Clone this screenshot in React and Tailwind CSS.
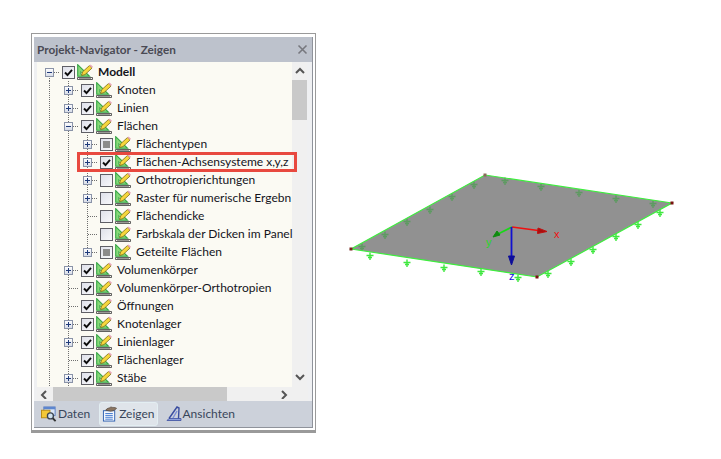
import React from "react";

const rows = [
  { t: "Modell", l: 0, e: "-", c: "y", bold: true },
  { t: "Knoten", l: 1, e: "+", c: "y" },
  { t: "Linien", l: 1, e: "+", c: "y" },
  { t: "Flächen", l: 1, e: "-", c: "y" },
  { t: "Flächentypen", l: 2, e: "+", c: "p" },
  { t: "Flächen-Achsensysteme x,y,z", l: 2, e: "+", c: "y", mark: true },
  { t: "Orthotropierichtungen", l: 2, e: "+", c: "n" },
  { t: "Raster für numerische Ergebn", l: 2, e: "+", c: "n" },
  { t: "Flächendicke", l: 2, c: "n" },
  { t: "Farbskala der Dicken im Panel", l: 2, c: "n" },
  { t: "Geteilte Flächen", l: 2, e: "+", c: "p", last: true },
  { t: "Volumenkörper", l: 1, e: "+", c: "y" },
  { t: "Volumenkörper-Orthotropien", l: 1, c: "y" },
  { t: "Öffnungen", l: 1, c: "y" },
  { t: "Knotenlager", l: 1, e: "+", c: "y" },
  { t: "Linienlager", l: 1, e: "+", c: "y" },
  { t: "Flächenlager", l: 1, c: "y" },
  { t: "Stäbe", l: 1, e: "+", c: "y" },
];

function Guide() {
  return (
    <svg width="19" height="18" className="shrink-0" shapeRendering="crispEdges">
      <line x1="8.5" y1="0" x2="8.5" y2="18" stroke="#6f6f6f" strokeDasharray="1 1" />
    </svg>
  );
}

function Expander({ e, root, last }) {
  return (
    <svg width="19" height="18" className="shrink-0" shapeRendering="crispEdges">
      <line x1="8.5" y1={root ? 9 : 0} x2="8.5" y2={last ? 9 : 18} stroke="#6f6f6f" strokeDasharray="1 1" />
      <line x1="9" y1="9.5" x2="19" y2="9.5" stroke="#6f6f6f" strokeDasharray="1 1" />
      {e && (
        <>
          <defs>
            <linearGradient id="exp" x1="0" y1="0" x2="0" y2="1">
              <stop offset="0" stopColor="#ffffff" />
              <stop offset="1" stopColor="#d5dae6" />
            </linearGradient>
          </defs>
          <rect x="4.5" y="5.5" width="8" height="8" fill="url(#exp)" stroke="#8a93a8" />
          <line x1="6" y1="9.5" x2="11" y2="9.5" stroke="#1f3a7a" />
          {e === "+" && <line x1="8.5" y1="7" x2="8.5" y2="12" stroke="#1f3a7a" />}
        </>
      )}
    </svg>
  );
}

function Check({ c }) {
  return (
    <span className="ml-[2px] flex h-[13px] w-[13px] shrink-0 items-center justify-center border border-[#5f5f66] bg-gradient-to-br from-[#dfe1ea] to-[#f8f8fb]">
      {c === "y" && (
        <svg width="11" height="11" viewBox="0 0 11 11">
          <path d="M2 5.5 L4.5 8 L9 2.8" fill="none" stroke="#0c0c0c" strokeWidth="1.9" />
        </svg>
      )}
      {c === "p" && <span className="h-[7px] w-[7px] bg-[#8b8b8b]" />}
    </span>
  );
}

function ModelIcon() {
  return (
    <svg width="16" height="16" viewBox="0 0 16 16" className="ml-[2px] shrink-0">
      <path d="M0.7 0.7 L0.7 12.3 L12.5 12.3 Z" fill="#86d977" stroke="#35a545" strokeWidth="1.1" />
      <path d="M3.5 7.5 L3.5 10.3 L6.5 10.3 Z" fill="#d8f0cf" stroke="#35a545" strokeWidth="0.7" />
      <path d="M4.6 11.6 L5.4 8 L12.4 1.6 L15 4.1 L8 10.6 Z" fill="#f6d63c" stroke="#7d6c18" strokeWidth="0.8" />
      <path d="M12.4 1.6 L13.6 0.4 L16 2.8 L15 4.1 Z" fill="#e9a9ba" />
      <path d="M0.5 13.5 H15.5 V15.5 H0.5 Z" fill="#f4f4ee" stroke="#3a3a3a" strokeWidth="0.8" />
      <path d="M3 14 V15 M5 14 V15 M7 14 V15 M9 14 V15 M11 14 V15 M13 14 V15" stroke="#111" strokeWidth="0.8" />
    </svg>
  );
}

function Row({ r }) {
  return (
    <div className="relative flex h-[18px] items-center">
      {r.l >= 1 && <Guide />}
      {r.l >= 2 && <Guide />}
      <Expander e={r.e} root={r.l === 0} last={r.last} />
      <Check c={r.c} />
      <ModelIcon />
      <span className={`ml-[5px] whitespace-nowrap text-[#14141c] ${r.bold ? "font-bold" : ""}`}>{r.t}</span>
      {r.mark && (
        <span className="absolute left-[36px] top-[-1px] z-10 h-[20px] w-[220px] border-[3px] border-[#e8493f]" />
      )}
    </div>
  );
}

function Chevron({ d, className = "" }) {
  const paths = {
    up: "M1 6 L5 2 L9 6",
    down: "M1 2 L5 6 L9 2",
    left: "M6 1 L2 5 L6 9",
    right: "M3 1 L7 5 L3 9",
  };
  return (
    <svg width="10" height="10" viewBox="0 0 10 8" className={`shrink-0 ${className}`}>
      <path d={paths[d]} fill="none" stroke="#555" strokeWidth="2" />
    </svg>
  );
}

function Tab({ icon, label, active }) {
  return (
    <div
      className={`flex h-[24px] items-center gap-[1px] px-[2px] ${
        active ? "rounded-[3px] border border-[#e3eef2] bg-[#dfe4ea]" : "border border-transparent"
      }`}
    >
      {icon}
      <span>{label}</span>
    </div>
  );
}

const DataIcon = (
  <svg width="16" height="16" viewBox="0 0 17 17" className="shrink-0">
    <rect x="3" y="1" width="12" height="9" fill="#dbe6f8" stroke="#5c7fc0" />
    <rect x="3" y="1" width="12" height="2.5" fill="#5c86cf" />
    <rect x="0.5" y="4.5" width="9" height="8" fill="#f3c838" stroke="#b88a12" />
    <circle cx="10" cy="10.5" r="3.2" fill="#cfe0ee" stroke="#3c4450" strokeWidth="1.4" />
    <path d="M12.5 13 L15.5 16" stroke="#333" strokeWidth="2" />
  </svg>
);

const ShowIcon = (
  <svg width="16" height="18" viewBox="0 0 17 18" className="shrink-0">
    <rect x="1.5" y="5.5" width="12" height="11" fill="#f4f7fd" stroke="#2d5fb0" />
    <path d="M3.5 8.5 H11.5 M3.5 10.5 H11.5 M3.5 12.5 H11.5 M3.5 14.5 H11.5" stroke="#3f77cf" />
    <path d="M4 5 C5 2.5 8 3 9.5 1.5 C11 2.5 14 1.5 15.5 3 C14 5 11 6 9 6 Z" fill="#8a7561" stroke="#4c4036" strokeWidth="0.7" />
  </svg>
);

const ViewIcon = (
  <svg width="16" height="16" viewBox="0 0 16 16" className="shrink-0">
    <path d="M1 14.5 H15 V12.5 H3 Z" fill="#8ea0dc" stroke="#3a4da0" strokeWidth="0.8" />
    <path d="M3 12.5 L11 1 L13 2 L12.5 12.5" fill="none" stroke="#3a4da0" strokeWidth="1.4" />
    <path d="M7 12 L11 5" stroke="#7d8fd8" strokeWidth="1.4" />
  </svg>
);

const tl = [[362, 247], [385, 235], [407, 222], [430, 210], [452, 197], [474, 185], [505, 181], [541, 187], [579, 193], [616, 199], [653, 204]];
const br = [[370, 256], [407, 263], [444, 268], [481, 272], [518, 278], [548, 274], [571, 262], [593, 250], [616, 237], [638, 225], [660, 213]];

function Tick({ p, color }) {
  const [x, y] = p;
  return (
    <path
      d={`M${x} ${y - 3.5} V${y + 4} M${x - 3.5} ${y - 0.5} H${x + 3.5} M${x - 2} ${y + 1.5} H${x + 2}`}
      stroke={color}
      strokeWidth="1.4"
      fill="none"
    />
  );
}

function Plate() {
  return (
    <svg viewBox="316 0 405 459" width="405" height="459" className="shrink-0">
      <polygon points="351,249 485,175 672,203 537,277" fill="#919191" />
      {tl.map((p) => (
        <Tick key={p.join()} p={p} color="#5e9a62" />
      ))}
      <polygon points="351,249 485,175 672,203 537,277" fill="none" stroke="#3dee3d" strokeWidth="1.2" />
      {br.map((p) => (
        <Tick key={p.join()} p={p} color="#3fe83f" />
      ))}
      <rect x="349.5" y="247.5" width="3" height="3" fill="#7a1f1f" />
      <rect x="483.5" y="173.5" width="3" height="3" fill="#8a6a5a" />
      <rect x="670.5" y="201.5" width="3" height="3" fill="#7a1010" />
      <rect x="535.5" y="275.5" width="3" height="3" fill="#7a1010" />
      <line x1="512" y1="227" x2="542" y2="231" stroke="#f01010" strokeWidth="1.6" />
      <path d="M547 231.5 L538 228 L537.5 233.5 Z" fill="#a80f0f" stroke="#c01010" />
      <line x1="512" y1="227" x2="498" y2="234" stroke="#18d818" strokeWidth="1.6" />
      <path d="M493 237 L497 231 L500 235 Z" fill="#108a10" stroke="#108a10" />
      <line x1="511.5" y1="227" x2="511.5" y2="256" stroke="#1010d0" strokeWidth="1.8" />
      <path d="M511.5 265 L508.5 256 L514.5 256 Z" fill="#0d0d9a" stroke="#0d0d9a" />
      <text x="554" y="238" fontSize="11" fill="#f01010" fontFamily="Liberation Sans, sans-serif">x</text>
      <text x="486" y="246" fontSize="11" fill="#24d824" fontFamily="Liberation Sans, sans-serif">y</text>
      <text x="509" y="280" fontSize="11" fill="#1010e0" fontFamily="Liberation Sans, sans-serif">z</text>
    </svg>
  );
}

export default function App() {
  return (
    <div className="flex h-[459px] w-[721px] overflow-hidden bg-white font-['Lato',sans-serif] text-[12px]">
      <div className="ml-[31px] mt-[33px] h-[400px] w-[285px] shrink-0 border-b-[3px] border-r border-l border-t border-[#9a9a9a] bg-white p-[2px] pt-[3px]">
        <div className="flex h-full w-[279px] flex-col border border-[#8f939b] border-t-0 border-l-0 bg-[#bdc2cc]">
          <div className="flex h-[25px] shrink-0 items-center justify-between pl-[3px] pr-[4px]">
            <span className="whitespace-nowrap text-[11.75px] font-bold text-[#4a4a54]">Projekt-Navigator - Zeigen</span>
            <svg width="11" height="11" viewBox="0 0 11 11">
              <path d="M1.5 1.5 L9.5 9.5 M9.5 1.5 L1.5 9.5" stroke="#77787e" strokeWidth="1.6" />
            </svg>
          </div>
          <div className="flex min-h-0 flex-1 flex-col bg-[#eff0f2] pl-[3px] pr-[4px]">
            <div className="flex h-[325px] shrink-0">
              <div className="h-full w-[255px] shrink-0 bg-[#fbfaf3] pl-[4px] pt-[1px]">
                {rows.map((r) => (
                  <Row key={r.t} r={r} />
                ))}
              </div>
              <div className="flex w-[15px] shrink-0 flex-col items-center bg-[#f0f0f0]">
                <div className="flex h-[18px] items-center"><Chevron d="up" /></div>
                <div className="h-[40px] w-full bg-[#c9c9c9]" />
                <div className="flex flex-1 items-end pb-[5px]"><Chevron d="down" /></div>
              </div>
            </div>
            <div className="flex h-[14px] shrink-0 items-center bg-[#f0f0f0]">
              <div className="flex w-[16px] justify-center"><Chevron d="left" /></div>
              <div className="h-full w-[174px] bg-[#c9c9c9]" />
              <div className="flex w-[65px] justify-end pr-[3px]"><Chevron d="right" /></div>
            </div>
          </div>
          <div className="flex h-[26px] shrink-0 items-center bg-[#ccd1da] pl-[4px] text-[#39465a]">
            <Tab icon={DataIcon} label="Daten" />
            <div className="ml-[6px]">
              <Tab icon={ShowIcon} label="Zeigen" active />
            </div>
            <div className="ml-[5px]">
              <Tab icon={ViewIcon} label="Ansichten" />
            </div>
          </div>
        </div>
      </div>
      <Plate />
    </div>
  );
}
